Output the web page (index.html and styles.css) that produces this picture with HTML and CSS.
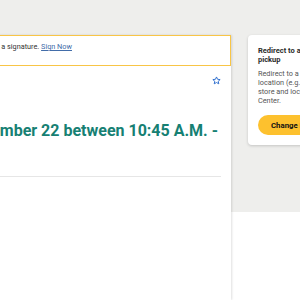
FILE: index.html
```html
<!DOCTYPE html>
<html lang="en">
<head>
  <meta charset="UTF-8">
  <meta name="viewport" content="width=device-width, initial-scale=1.0">
  <title>Tracking Details</title>
  <link rel="stylesheet" href="styles.css">
</head>
<body>

  <div class="page">
    <main class="main">
      <div class="notice">
        Delivery may require a signature. <a href="#">Sign Now</a>
      </div>

      <section class="status">
        <div class="status-top">
          <button class="fav" aria-label="Save shipment">
            <svg viewBox="0 0 24 24" width="9" height="9">
              <path d="M12 2.5l2.9 6.3 6.8.7-5.1 4.6 1.5 6.8L12 17.4l-6.1 3.5 1.5-6.8L2.3 9.5l6.8-.7z" fill="none" stroke="currentColor" stroke-width="2.6" stroke-linejoin="round"/>
            </svg>
          </button>
        </div>
        <h1 class="eta">Friday, November 22 between 10:45 A.M. - 2:45 P.M.</h1>
        <hr class="rule">
      </section>
    </main>

    <aside class="side">
      <div class="card">
        <h2>Redirect to a UPS Access Point&reg; for pickup</h2>
        <p>Redirect to a UPS Access Point&reg; location (e.g., a nearby UPS retail store and locker) or a UPS Customer Center.</p>
        <button class="btn">Change Delivery</button>
      </div>
    </aside>
  </div>

</body>
</html>
```

FILE: styles.css
```css
* {
  margin: 0;
  padding: 0;
  box-sizing: border-box;
}

body {
  font-family: Roboto, 'Liberation Sans', sans-serif;
  color: #333;
  background: #fff;
}

.page {
  display: flex;
  min-height: 300px;
  padding-top: 35px;
  background: linear-gradient(#eeeeec 212px, #fff 212px);
}

.main {
  flex: none;
  width: 329px;
  margin-left: -98px;
  background: #fff;
  box-shadow: 1px 0 2px rgba(0, 0, 0, 0.12);
}

.notice {
  border: 1px solid #f8c546;
  padding: 6px 12px 13px 31px;
  font-size: 7.3px;
  line-height: 10px;
  color: #333;
}

.notice a {
  color: #426da9;
  text-decoration: underline;
}

.status {
  padding: 10px 10px 0;
}

.status-top {
  display: flex;
  justify-content: flex-end;
}

.fav {
  display: flex;
  border: none;
  background: none;
  color: #2f6fce;
  cursor: pointer;
}

.eta {
  margin-top: 36px;
  font-size: 16px;
  line-height: 20px;
  font-weight: 700;
  color: #168073;
}

.rule {
  margin-top: 15px;
  border: none;
  border-top: 1px solid #e6e6e6;
}

.side {
  padding-left: 17px;
}

.card {
  width: 200px;
  padding: 11px 10px 10px;
  background: #fff;
  border-radius: 4px;
  box-shadow: 0 1px 3px rgba(0, 0, 0, 0.18);
}

.card h2 {
  width: 132px;
  font-size: 7.5px;
  line-height: 9px;
  font-weight: 700;
  color: #2b2b2b;
}

.card p {
  width: 118px;
  margin-top: 5px;
  font-size: 7.3px;
  line-height: 9px;
  color: #555;
}

.btn {
  margin-top: 10px;
  height: 20px;
  padding: 0 13px;
  border: none;
  border-radius: 10px;
  background: #fdc12e;
  font-family: inherit;
  font-size: 7.8px;
  font-weight: 700;
  color: #121212;
  cursor: pointer;
}
```
